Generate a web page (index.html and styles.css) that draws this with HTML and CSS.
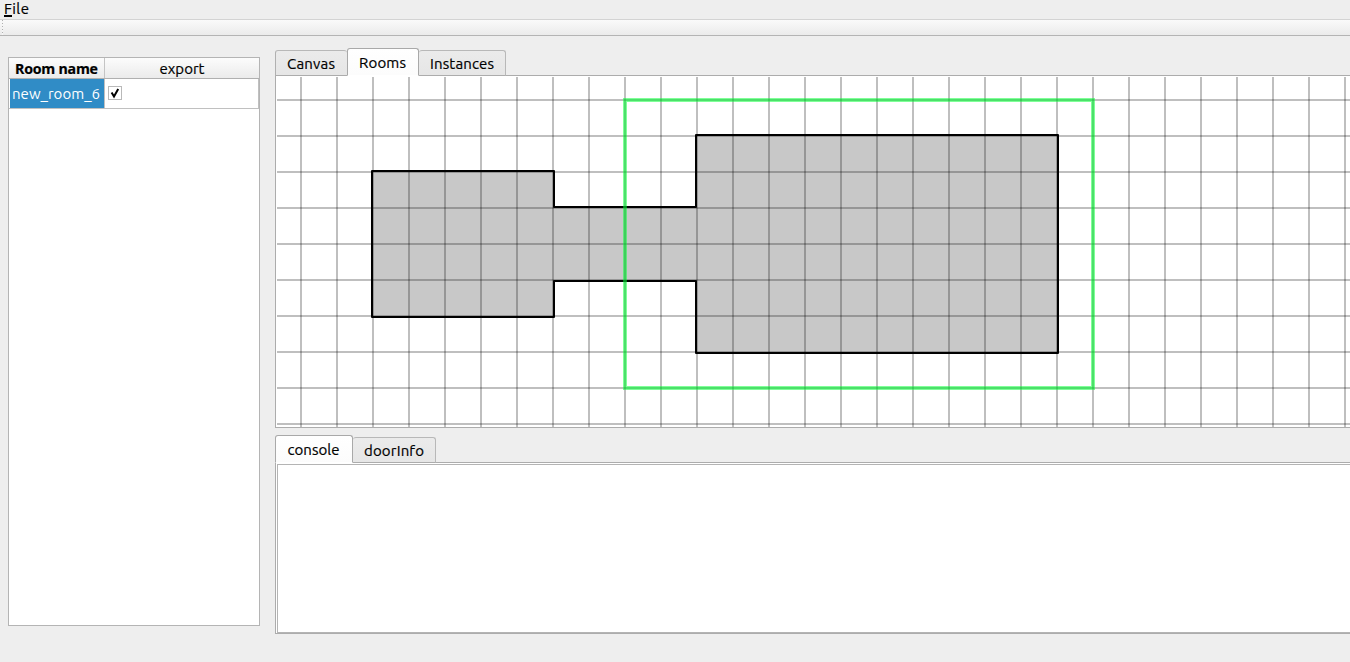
FILE: index.html
```html
<!DOCTYPE html>
<html lang="en">
<head>
<meta charset="utf-8">
<title>Room editor</title>
<link rel="stylesheet" href="styles.css">
</head>
<body>
<nav class="menubar"><svg class="label" width="40" height="19"><text x="4" y="14" textLength="25"><tspan class="mnemonic">F</tspan>ile</text><rect x="4" y="15" width="8" height="2"/></svg></nav>
<div class="toolbar"><span class="handle"></span></div>
<main class="workspace">
  <section class="room-list">
    <div class="row head">
      <div class="cell name"><svg class="label bold" width="94" height="20"><text x="6" y="16" textLength="83">Room name</text></svg></div>
      <div class="cell"><svg class="label" width="154" height="20"><text x="54.5" y="16" textLength="45">export</text></svg></div>
    </div>
    <div class="row item">
      <div class="cell name"><svg class="label light" width="94" height="29"><text x="2" y="20" textLength="88">new_room_6</text></svg></div>
      <div class="cell"><span class="checkbox"><svg width="12" height="12"><path d="M2.6 5.6 L5 9.6 L9.2 2" fill="none" stroke="#000" stroke-width="2"/></svg></span></div>
    </div>
  </section>
  <section class="panels">
    <div class="tabs upper">
      <div class="tab w-canvas"><svg class="label" width="70" height="24"><text x="11" y="18" textLength="48">Canvas</text></svg></div>
      <div class="tab active w-rooms"><svg class="label" width="69" height="26"><text x="11" y="19" textLength="47">Rooms</text></svg></div>
      <div class="tab w-instances"><svg class="label" width="86" height="24"><text x="11" y="18" textLength="64">Instances</text></svg></div>
    </div>
    <div class="view">
      <svg class="drawing" width="1073" height="350" viewBox="277 77 1073 350">
        <defs>
          <pattern id="columns" x="300" y="0" width="36" height="36" patternUnits="userSpaceOnUse"><rect width="2" height="36" fill-opacity=".25"/></pattern>
          <pattern id="lines" x="0" y="99" width="36" height="36" patternUnits="userSpaceOnUse"><rect width="36" height="2" fill-opacity=".25"/></pattern>
        </defs>
        <path class="room" d="M372 171H554V207H696V135H1058V353H696V281H554V317H372Z"/>
        <rect x="277" y="77" width="1073" height="350" fill="url(#columns)"/>
        <rect x="277" y="77" width="1073" height="350" fill="url(#lines)"/>
        <rect class="bounds" x="625" y="100" width="468" height="288"/>
        <rect class="bounds core" x="625" y="100" width="468" height="288"/>
      </svg>
    </div>
    <div class="tabs lower">
      <div class="tab active w-console"><svg class="label" width="75" height="26"><text x="11.5" y="19" textLength="52">console</text></svg></div>
      <div class="tab w-door"><svg class="label" width="82" height="24"><text x="11" y="18" textLength="60">doorInfo</text></svg></div>
    </div>
    <div class="console"><div class="output"></div></div>
  </section>
</main>
</body>
</html>
```
FILE: styles.css
```css
* { box-sizing: border-box; }
body {
  margin: 0;
  width: 1350px;
  height: 662px;
  overflow: hidden;
  background: #eeeeee;
  color: #000;
  font: 15px Ubuntu, "Noto Sans", "Open Sans", sans-serif;
}
svg { display: block; }
.label { font-size: 15px; overflow: visible; }
.label text { stroke: #000; stroke-width: .2px; }
.label.bold { font-size: 14.2px; font-weight: 700; font-family: "Open Sans", sans-serif; }
.light { fill: #fff; }
.label.light text { stroke: none; }
.menubar { height: 19px; }
.toolbar {
  height: 17px;
  border-top: 1px solid #d3d3d3;
  border-bottom: 1px solid #b4b4b4;
  background: linear-gradient(#fafafa, #ebebeb);
}
.handle { display: block; width: 1px; height: 15px; margin-left: 2px; background: repeating-linear-gradient(#b0b0b0 0 1px, #f6f6f6 1px 3px); }
.workspace { display: flex; height: 626px; padding: 12px 0 0 8px; }
.room-list {
  width: 252px;
  height: 569px;
  margin: 9px 15px 0 0;
  border: 1px solid #b4b4b4;
  background: #fff;
}
.row { display: flex; }
.head { height: 21px; border-bottom: 1px solid #b0b0b0; background: linear-gradient(#fcfcfc, #ebebeb); }
.cell { width: 154px; }
.cell.name { width: 96px; border-right: 1px solid #c4c4c4; }
.item { height: 30px; border-bottom: 1px solid #c0c0c0; }
.item .cell { border-right: 1px solid #c0c0c0; }
.item .name { background: #308cc6; border-left: 1px solid #fff; }
.checkbox { display: block; width: 14px; height: 14px; margin: 7px 0 0 3px; border: 1px solid #b9b9b9; background: #fff; }
.panels { width: 1075px; flex: none; }
.tabs { display: flex; align-items: flex-end; height: 28px; position: relative; }
.tab {
  height: 26px;
  border: 1px solid #b8b8b8;
  border-left: 0;
  border-bottom-color: #acacac;
  border-radius: 3px 3px 0 0;
  background: linear-gradient(#ebebeb, #e6e6e6);
}
.tab:first-child { border-left: 1px solid #b0b0b0; }
.tab.active { height: 28px; border-color: #a9a9a9; border-bottom-color: #fff; background: linear-gradient(#ffffff, #fcfcfc); }
.w-canvas { width: 72px; border-right: 0; }
.w-rooms { width: 72px; border-left: 1px solid #a9a9a9; }
.w-instances { width: 87px; }
.w-console { width: 78px; }
.w-door { width: 83px; }
.view {
  height: 353px;
  margin-top: -1px;
  padding: 1px 0 0 1px;
  border: 1px solid #acacac;
  border-right: 0;
  background: #fff;
}
.room { fill: #c8c8c8; stroke: #000; stroke-width: 2; stroke-linejoin: round; }
.bounds { fill: none; stroke: #00ff32; stroke-opacity: .5; stroke-width: 4; }
.bounds.core { stroke: #00e632; stroke-width: 2; stroke-opacity: .2; }
.lower { margin-top: 7px; }
.console {
  height: 172px;
  margin-top: -1px;
  padding: 1px 0 0 1px;
  border: 1px solid #acacac;
  border-right: 0;
  background: #fff;
}
.output { height: 169px; border: 1px solid #b4b4b4; border-right: 0; }
.view, .console { position: relative; }
.tabs { z-index: 1; }
```
